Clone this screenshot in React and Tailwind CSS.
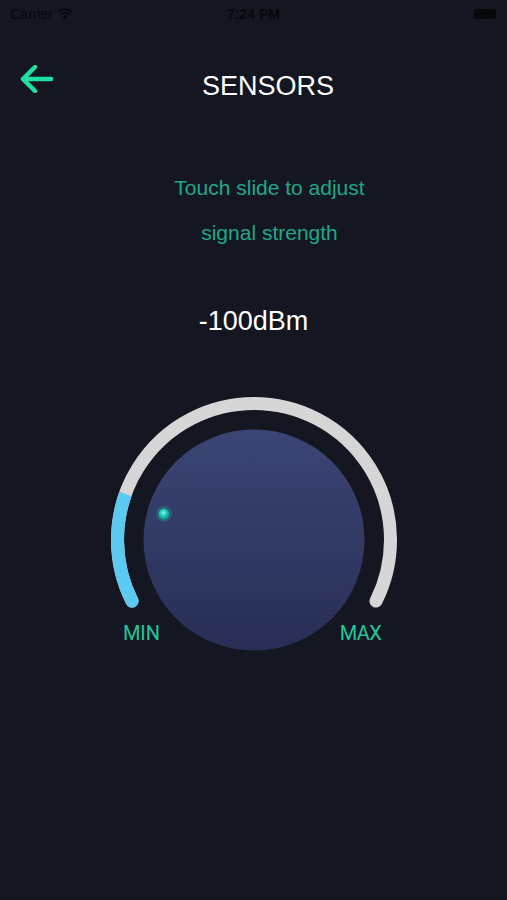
import React from "react";

const Dial = ({ value = 0.2 }) => {
  // arc geometry in local coords: center (150,150), r 136.5
  return (
    <div className="relative w-[300px] h-[262px]">
      <svg width="300" height="262" viewBox="0 0 300 262" className="block">
        <defs>
          <linearGradient id="knob" x1="0" y1="0" x2="0" y2="1">
            <stop offset="0%" stopColor="#3b4575" />
            <stop offset="100%" stopColor="#282e55" />
          </linearGradient>
          <radialGradient id="dot" cx="0.45" cy="0.4" r="0.6">
            <stop offset="0%" stopColor="#8ff5ea" />
            <stop offset="55%" stopColor="#16c2b0" />
            <stop offset="100%" stopColor="#0c8f86" />
          </radialGradient>
        </defs>
        <path
          d="M 28 211.1 A 136.5 136.5 0 1 1 272 211.1"
          fill="none"
          stroke="#d6d6d6"
          strokeWidth="13"
          strokeLinecap="round"
        />
        <path
          d="M 28 211.1 A 136.5 136.5 0 0 1 21.5 104"
          fill="none"
          stroke="#5cc9f0"
          strokeWidth="13"
          strokeLinecap="butt"
        />
        <circle cx="28" cy="211.1" r="6.5" fill="#5cc9f0" />
        <circle cx="150" cy="150" r="110.5" fill="url(#knob)" />
        <circle cx="60" cy="124" r="8" fill="#2f6f86" opacity="0.6" />
        <circle cx="60" cy="124" r="5.5" fill="url(#dot)" />
      </svg>
      <span className="absolute left-[17px] top-[232px] w-[42px] text-center text-[20px] leading-[22px] text-[#22c79c] font-['Roboto',sans-serif]">
        MIN
      </span>
      <span className="absolute left-[236px] top-[232px] w-[42px] text-center text-[20px] leading-[22px] text-[#22c79c] font-['Roboto',sans-serif] tracking-[-0.5px]">
        MAX
      </span>
    </div>
  );
};

export default function App() {
  return (
    <div className="min-h-[900px] w-full bg-[#141721] font-['Liberation_Sans',Arial,sans-serif]">
      {/* Status bar */}
      <div className="relative flex h-[28px] items-center justify-between px-[10px] text-[14px] text-[#07080c]">
        <div className="flex items-center gap-[4px]">
          <span>Carrier</span>
          <svg width="16" height="12" viewBox="0 0 16 12">
            <path d="M8 11.5 L5.6 8.6 A3.6 3.6 0 0 1 10.4 8.6 Z" fill="#07080c" />
            <path d="M3.6 6.4 A6.6 6.6 0 0 1 12.4 6.4" stroke="#07080c" strokeWidth="1.8" fill="none" />
            <path d="M1.2 3.9 A10 10 0 0 1 14.8 3.9" stroke="#07080c" strokeWidth="1.8" fill="none" />
          </svg>
        </div>
        <span className="absolute left-1/2 -translate-x-1/2 font-semibold">7:24 PM</span>
        <div className="mr-[1px] h-[10px] w-[22px] rounded-[3px] bg-[#07080c]" />
      </div>

      {/* Header */}
      <div className="flex items-start pl-[19px] pt-[37px] pr-[24px]">
        <svg width="34" height="28" viewBox="0 0 34 28" className="shrink-0">
          <path
            d="M32 14 H4 M16 2 L4 14 L16 26"
            fill="none"
            stroke="#1fe0a2"
            strokeWidth="4.5"
            strokeLinecap="round"
            strokeLinejoin="round"
          />
        </svg>
        <h1 className="mt-[6px] flex-1 text-center text-[27px] leading-[30px] text-white">
          SENSORS
        </h1>
      </div>

      {/* Instructions */}
      <div className="mt-[64px] pl-[32px] text-center text-[21px] leading-[45px] text-[#1fa887]">
        Touch slide to adjust
        <br />
        signal strength
      </div>

      {/* Value */}
      <div className="mt-[50px] text-center text-[27px] leading-[32px] text-white">
        -100dBm
      </div>

      <div className="mt-[53px] flex justify-center">
        <Dial />
      </div>
    </div>
  );
}
